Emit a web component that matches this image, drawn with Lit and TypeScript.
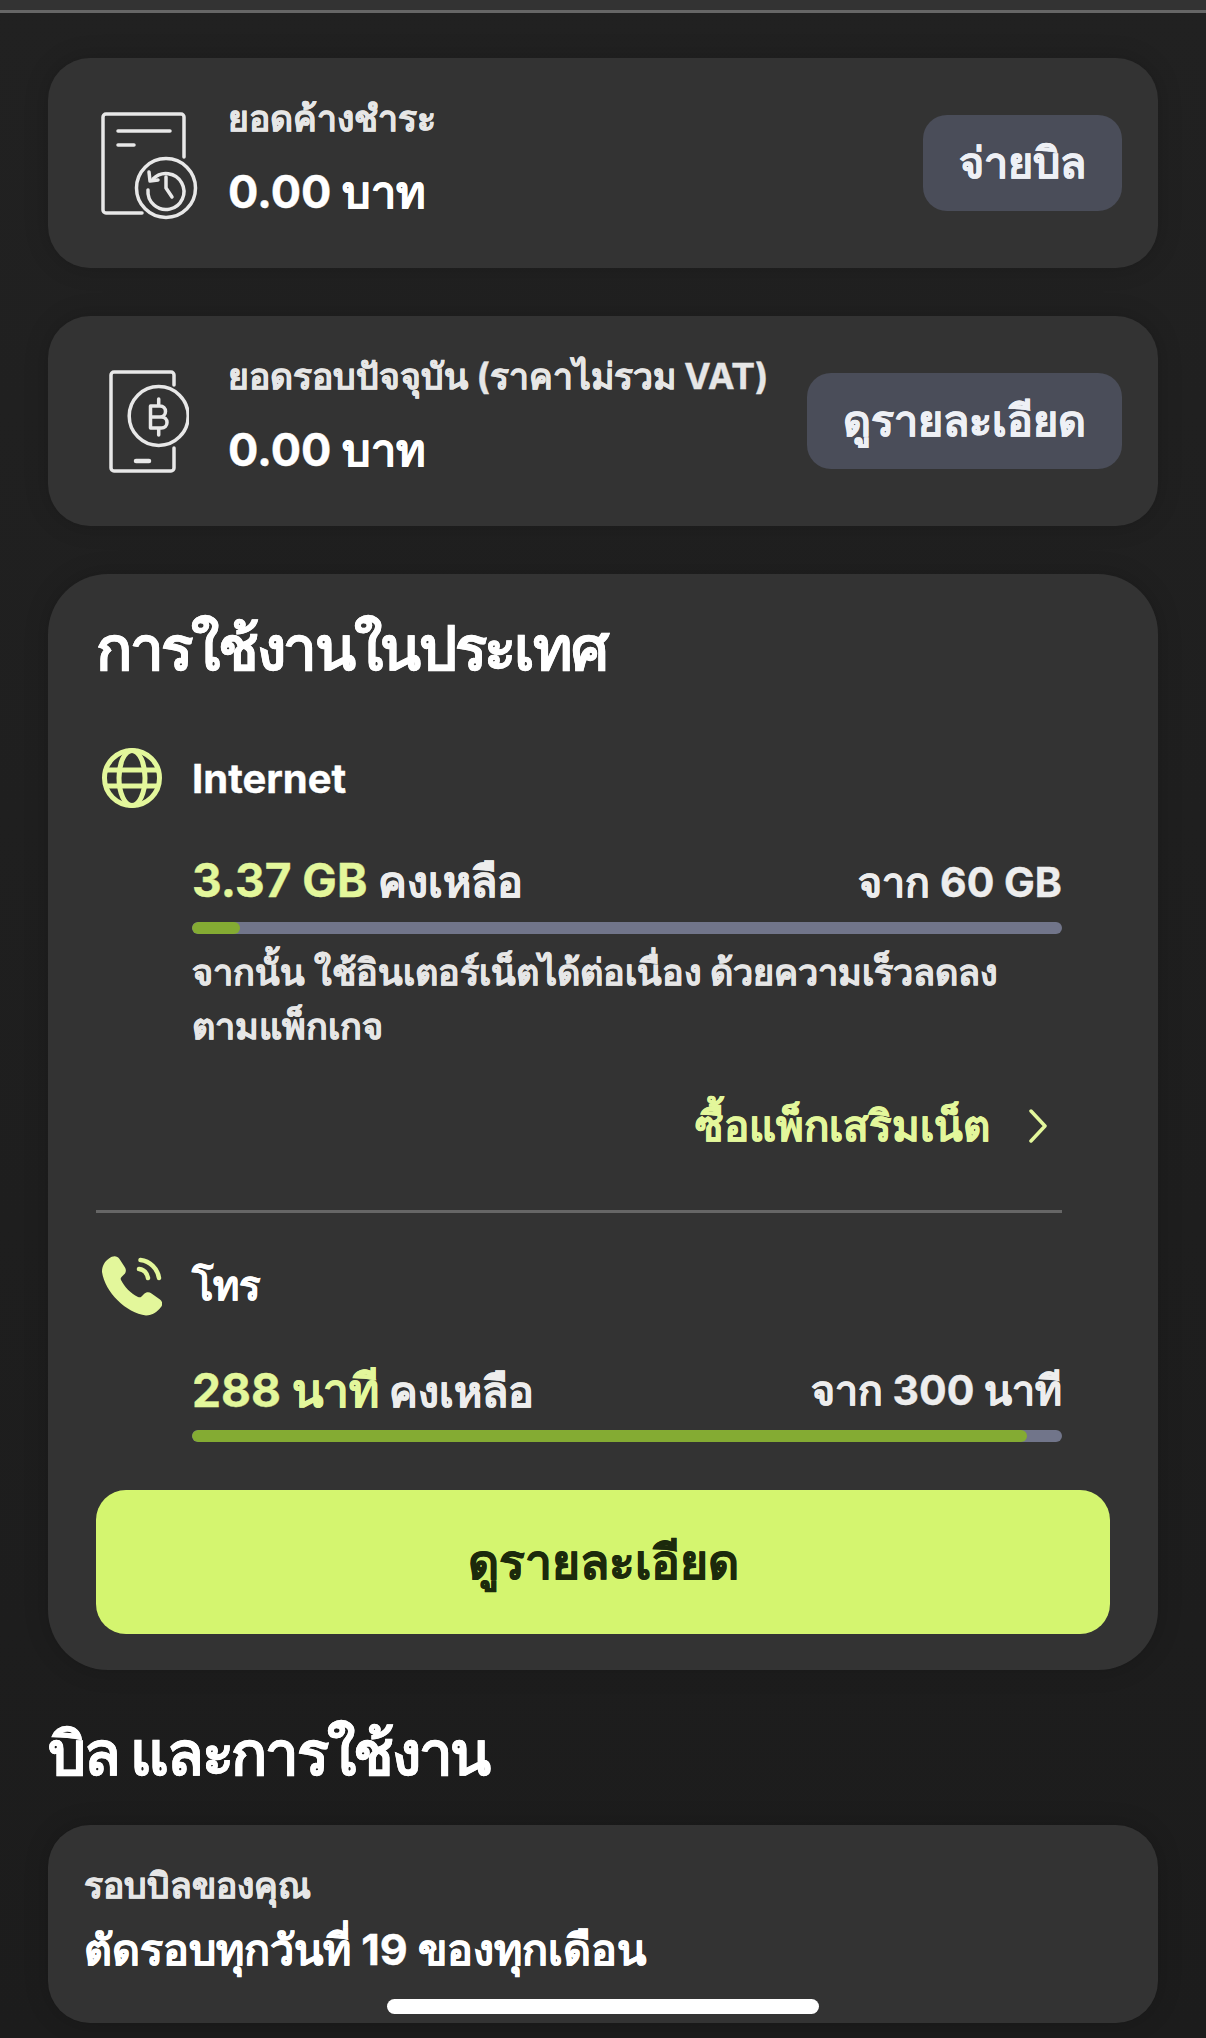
import { LitElement, html, css } from 'lit';
import { customElement } from 'lit/decorators.js';

const billIcon = html`<svg class="icon bill" viewBox="0 0 98 108" fill="none" stroke="#e8e8e8" stroke-width="3.5" stroke-linecap="round" stroke-linejoin="round">
  <path d="M83 45V5a3 3 0 0 0-3-3H5a3 3 0 0 0-3 3v93a3 3 0 0 0 3 3h36" />
  <path d="M17 19h52M17 33h16" />
  <circle cx="65" cy="76" r="29.5" />
  <path d="M52 67a18 18 0 1 1-5 11" />
  <path d="M48 60l1 9 8-1" />
  <path d="M65 65v11l6 9" />
</svg>`;

const coinIcon = html`<svg class="icon coin" viewBox="0 0 80 104" fill="none" stroke="#e8e8e8" stroke-width="3.5" stroke-linecap="round" stroke-linejoin="round">
  <path d="M65 16V6a3 3 0 0 0-3-3H5a3 3 0 0 0-3 3v93a3 3 0 0 0 3 3h57a3 3 0 0 0 3-3V79" />
  <circle cx="49.700" cy="47" r="29.500" />
  <path d="M27 92h13" stroke-width="4.500" />
  <path d="M41.500 37v22M41.500 37h9.500a5.500 5.500 0 0 1 0 11h-9.500M41.500 48h11a5.500 5.500 0 0 1 0 11h-11M49.700 30v7M49.700 59v7" />
</svg>`;

const globeIcon = html`<svg class="icon glyph" viewBox="0 0 60 60" fill="none" stroke="#e3f79b" stroke-width="5">
  <circle cx="30" cy="30" r="27.500" />
  <ellipse cx="30" cy="30" rx="13" ry="27.500" />
  <path d="M4 22h52M4 38h52" />
</svg>`;

const phoneIcon = html`<svg class="icon glyph" viewBox="0 0 60 60">
  <path fill="#e3f79b" d="M7 2.500C11-.5 15-.5 17.500 3l5.500 8.500c1.500 2.500 1 5-1 7l-2.500 2.500c-1 1-1 2-.5 3 3.500 7 9.500 13 17 17 1.500.5 2.500.5 3.500-.5l2.500-2.500c2-2 5-2.500 7.500-.5l8.500 6c2.500 2 3 5 1 7.500-3.500 4.500-8.500 8.500-15 8.500C24 57 3 36 0 16 0 10 2.500 5.500 7 2.500z" />
  <path fill="none" stroke="#e3f79b" stroke-width="4.500" stroke-linecap="round" d="M38.500 4c9.500 1 17 8.500 18.500 18M37 13c4.500.5 8 4 9 9" />
</svg>`;

@customElement('app-root')
export class AppRoot extends LitElement {
  static styles = css`
    :host {
      display: block;
      position: relative;
      height: 2038px;
      overflow: hidden;
      background: linear-gradient(#212121, #1c1c1c);
      font-family: Inter, 'Liberation Sans', 'Noto Sans', sans-serif;
      color: #fff;
      -webkit-text-stroke: 0.4px;
    }

    .topbar {
      height: 10px;
      background: #333;
      border-bottom: 3px solid #666;
    }

    .page {
      display: flex;
      flex-direction: column;
      padding: 45px 48px 0;
    }

    .card {
      background: #333;
      border-radius: 42px;
      box-shadow: 0 0 24px rgba(0, 0, 0, 0.18);
    }

    .summary {
      height: 210px;
      box-sizing: border-box;
      display: flex;
      align-items: center;
      padding-right: 36px;
      margin-bottom: 48px;
    }

    .icon-slot {
      width: 180px;
      flex: none;
      box-sizing: border-box;
    }

    .icon {
      display: block;
    }

    .bill {
      width: 98px;
      height: 108px;
      margin: 6px 0 0 53px;
    }

    .coin {
      width: 80px;
      height: 104px;
      margin-left: 61px;
    }

    .summary-text {
      flex: 1;
      display: flex;
      flex-direction: column;
      gap: 22px;
      padding-bottom: 10px;
    }

    .label {
      font-size: 35.5px;
      line-height: 46px;
      font-weight: 700;
      color: #e6e6e6;
    }

    .amount {
      font-size: 45px;
      line-height: 56px;
      font-weight: 700;
    }

    .soft-btn {
      height: 96px;
      padding: 0 36px;
      display: flex;
      align-items: center;
      background: #4a4d59;
      color: #eef0f5;
      border-radius: 24px;
      font-size: 43px;
      font-weight: 700;
    }

    .usage {
      border-radius: 60px;
      padding: 32px 48px 36px;
      margin-bottom: 44px;
    }

    h2 {
      margin: 0;
      font-size: 60px;
      line-height: 84px;
      letter-spacing: -2.3px;
      font-weight: 700;
    }

    .service {
      display: flex;
      align-items: center;
      gap: 30px;
      height: 62px;
      padding-left: 6px;
      font-size: 40px;
      font-weight: 700;
    }

    .glyph {
      width: 60px;
      height: 60px;
    }

    .service-first {
      margin-top: 57px;
    }

    .detail {
      margin: 0 48px 0 96px;
    }

    .stat {
      display: flex;
      justify-content: space-between;
      align-items: center;
      height: 60px;
      margin-top: 43px;
      font-size: 41px;
      font-weight: 700;
      color: #ededed;
    }

    .stat b {
      font-size: 46px;
      font-weight: 700;
      color: #e3f79b;
    }

    .left {
      font-size: 43px;
    }

    .track {
      height: 12px;
      margin-top: 10px;
      border-radius: 6px;
      background: #71758a;
      overflow: hidden;
    }

    .fill {
      height: 100%;
      border-radius: 6px;
      background: #84ab33;
    }

    .note {
      margin: 11px 0 0;
      font-size: 36px;
      line-height: 54px;
      font-weight: 700;
      color: #e6e6e6;
    }

    .more {
      display: flex;
      justify-content: flex-end;
      align-items: center;
      gap: 38px;
      height: 60px;
      margin-top: 43px;
      padding-right: 14px;
      font-size: 42px;
      font-weight: 700;
      color: #e3f79b;
    }

    .more svg {
      width: 20px;
      height: 34px;
    }

    .divider {
      height: 3px;
      margin: 54px 48px 42px 0;
      background: #666;
    }

    .primary {
      display: flex;
      align-items: center;
      justify-content: center;
      height: 144px;
      margin-top: 48px;
      border-radius: 30px;
      background: #d4f56f;
      color: #1c2a0c;
      font-size: 48px;
      font-weight: 700;
    }

    .section-title {
      line-height: 78px;
      margin-bottom: 33px;
    }

    .cycle {
      height: 198px;
      box-sizing: border-box;
      padding: 38px 36px;
      display: flex;
      flex-direction: column;
      gap: 12px;
    }

    .cycle .value {
      font-size: 43px;
      line-height: 56px;
      font-weight: 700;
    }

    .home {
      position: absolute;
      left: 387px;
      top: 1999px;
      width: 432px;
      height: 15px;
      border-radius: 8px;
      background: #fff;
    }
  `;

  private stat(value: string, total: string, pct: number) {
    return html`
      <div class="stat">
        <span class="left"><b>${value}</b> คงเหลือ</span>
        <span>${total}</span>
      </div>
      <div class="track"><div class="fill" style="width:${pct}%"></div></div>
    `;
  }

  render() {
    return html`
      <div class="topbar"></div>
      <div class="page">
        <section class="card summary">
          <div class="icon-slot">${billIcon}</div>
          <div class="summary-text">
            <div class="label">ยอดค้างชำระ</div>
            <div class="amount">0.00 บาท</div>
          </div>
          <div class="soft-btn">จ่ายบิล</div>
        </section>

        <section class="card summary">
          <div class="icon-slot">${coinIcon}</div>
          <div class="summary-text">
            <div class="label">ยอดรอบปัจจุบัน (ราคาไม่รวม VAT)</div>
            <div class="amount">0.00 บาท</div>
          </div>
          <div class="soft-btn">ดูรายละเอียด</div>
        </section>

        <section class="card usage">
          <h2>การใช้งานในประเทศ</h2>
          <div class="service service-first">${globeIcon}<span>Internet</span></div>
          <div class="detail">
            ${this.stat('3.37 GB', 'จาก 60 GB', 5.5)}
            <p class="note">จากนั้น ใช้อินเตอร์เน็ตได้ต่อเนื่อง ด้วยความเร็วลดลง<br />ตามแพ็กเกจ</p>
            <div class="more">
              <span>ซื้อแพ็กเสริมเน็ต</span>
              <svg viewBox="0 0 20 34" fill="none" stroke="#e3f79b" stroke-width="3.500" stroke-linecap="round" stroke-linejoin="round"><path d="M3 2l14 15L3 32" /></svg>
            </div>
          </div>
          <div class="divider"></div>
          <div class="service">${phoneIcon}<span>โทร</span></div>
          <div class="detail">
            ${this.stat('288 นาที', 'จาก 300 นาที', 96)}
          </div>
          <div class="primary">ดูรายละเอียด</div>
        </section>

        <h2 class="section-title">บิล และการใช้งาน</h2>

        <section class="card cycle">
          <div class="label">รอบบิลของคุณ</div>
          <div class="value">ตัดรอบทุกวันที่ 19 ของทุกเดือน</div>
        </section>
      </div>
      <div class="home"></div>
    `;
  }
}
